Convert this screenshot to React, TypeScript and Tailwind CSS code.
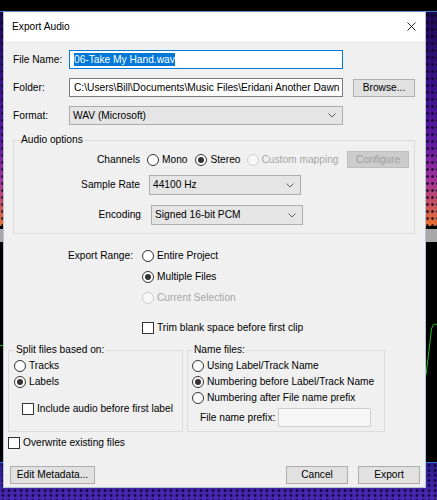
import React from 'react';

function Radio({ label, checked = false, disabled = false }: { label: string; checked?: boolean; disabled?: boolean }) {
  return (
    <div className="flex h-[16px] items-center">
      <span
        className={`flex h-[12px] w-[12px] shrink-0 items-center justify-center rounded-full border ${disabled ? 'border-[#cccccc] bg-[#f7f7f7]' : 'border-[#333333] bg-white'}`}>
        {checked && <span className="h-[6px] w-[6px] rounded-full bg-[#333333]" />}
      </span>
      <span className={`ml-[3px] whitespace-nowrap ${disabled ? 'text-[#a6a6a6]' : 'text-black'}`}>{label}</span>
    </div>
  );
}

function Check({ label }: { label: string }) {
  return (
    <div className="flex h-[16px] items-center">
      <span className="h-[12px] w-[12px] shrink-0 border border-[#333333] bg-white" />
      <span className="ml-[3px] whitespace-nowrap">{label}</span>
    </div>
  );
}

function Chevron() {
  return (
    <svg width="8" height="5" viewBox="0 0 8 5" className="shrink-0">
      <path d="M0.5 0.5 L4 4 L7.5 0.5" fill="none" stroke="#606060" strokeWidth="1" />
    </svg>
  );
}

function Combo({ value, className }: { value: string; className: string }) {
  return (
    <div className={`flex items-center justify-between border border-[#adadad] bg-[#e5e5e5] pl-[3px] pr-[6px] ${className}`}>
      <span className="whitespace-nowrap">{value}</span>
      <Chevron />
    </div>
  );
}

function Btn({ label, className, disabled = false }: { label: string; className: string; disabled?: boolean }) {
  return (
    <button
      className={`flex items-center justify-center border ${disabled ? 'border-[#bfbfbf] bg-[#cccccc] text-[#a0a0a0]' : 'border-[#adadad] bg-[#e1e1e1] text-black'} ${className}`}>
      {label}
    </button>
  );
}

export default function App() {
  return (
    <div className="relative flex h-[500px] w-[437px] flex-col overflow-hidden bg-black font-['Liberation_Sans',Arial,sans-serif] text-[10.2px] text-black">
      {/* background: the editor window behind the dialog */}
      <div className="h-[11px] bg-black" />
      <div className="h-[1px] bg-[#3a7ad8]" />
      <div className="h-[214px] bg-[radial-gradient(circle,rgba(8,2,30,0.75)_1px,transparent_1.7px),linear-gradient(to_bottom,#1c0a50,#3a128a_35%,#5a1a9e_60%,#a0309a_78%,#e8702e)] bg-[length:5px_7px,100%_100%]" />
      <div className="h-[3px] bg-black" />
      <div className="h-[13px] bg-[#a9a9a9]" />
      <div className="h-[220px] bg-black" />
      <div className="h-[1px] bg-[#2f6fd8]" />
      <div className="flex-1 bg-[radial-gradient(circle,rgba(10,5,40,0.8)_1px,transparent_1.8px),linear-gradient(to_bottom,#2a1a8c,#4a28b4)] bg-[length:6px_5px,100%_100%]" />

      <div className="absolute left-0 top-[345px] h-[1px] w-[4px] bg-[#1fb01f]" />
      <svg className="absolute left-[424px] top-[320px]" width="13" height="58" viewBox="0 0 13 58">
        <path d="M2 55 L7.5 9 Q8.5 4 11 4 L13 4.5" fill="none" stroke="#22c022" strokeWidth="1" />
      </svg>

      {/* dialog */}
      <div className="absolute left-[3px] top-[11px] w-[423px] border border-[#b8c2d0] border-t-[#5f8fd0] bg-[#f0f0f0]">
        <div className="flex h-[29px] items-center justify-between bg-white pl-[8px] pr-[9px]">
          <span>Export Audio</span>
          <svg width="9" height="9" viewBox="0 0 9 9">
            <path d="M0.5 0.5 L8.5 8.5 M8.5 0.5 L0.5 8.5" stroke="#111111" strokeWidth="0.9" />
          </svg>
        </div>

        <div className="pb-[3px] pt-[9px]">
          <div className="flex h-[19px] items-center pl-[9px]">
            <span className="w-[56px]">File Name:</span>
            <div className="flex h-[19px] w-[274px] items-center border border-[#0078d7] bg-white pl-[4px]">
              <span className="bg-[#0078d7] leading-[13px] text-white">06-Take My Hand.wav</span>
            </div>
          </div>

          <div className="mt-[9px] flex h-[19px] items-center pl-[9px]">
            <span className="w-[56px]">Folder:</span>
            <div className="flex h-[19px] w-[274px] items-center overflow-hidden border border-[#7a7a7a] bg-white pl-[4px]">
              <span className="whitespace-nowrap">C:\Users\Bill\Documents\Music Files\Eridani Another Dawn</span>
            </div>
            <Btn label="Browse..." className="ml-[10px] h-[18px] w-[62px]" />
          </div>

          <div className="mt-[9px] flex h-[19px] items-center pl-[9px]">
            <span className="w-[56px]">Format:</span>
            <Combo value="WAV (Microsoft)" className="h-[19px] w-[274px]" />
          </div>

          <div className="relative ml-[9px] mt-[15px] w-[402px] border border-[#dcdcdc] pb-[8px] pt-[10px]">
            <span className="absolute left-[6px] top-[-8px] bg-[#f0f0f0] px-[1px] leading-[14px]">Audio options</span>
            <div className="flex h-[17px] items-center">
              <span className="w-[126px] text-right">Channels</span>
              <div className="ml-[7px]">
                <Radio label="Mono" />
              </div>
              <div className="ml-[8px]">
                <Radio label="Stereo" checked />
              </div>
              <div className="ml-[6px]">
                <Radio label="Custom mapping" disabled />
              </div>
              <Btn label="Configure" disabled className="ml-auto mr-[5px] h-[17px] w-[62px]" />
            </div>
            <div className="mt-[7px] flex items-center">
              <span className="w-[126px] text-right">Sample Rate</span>
              <Combo value="44100 Hz" className="ml-[9px] h-[20px] w-[152px]" />
            </div>
            <div className="mt-[10px] flex items-center">
              <span className="w-[127px] text-right">Encoding</span>
              <Combo value="Signed 16-bit PCM" className="ml-[10px] h-[20px] w-[152px]" />
            </div>
          </div>

          <div className="mt-[14px] flex">
            <span className="flex h-[16px] w-[129px] items-center justify-end">Export Range:</span>
            <div className="ml-[9px] flex flex-col">
              <Radio label="Entire Project" />
              <div className="mt-[5px]">
                <Radio label="Multiple Files" checked />
              </div>
              <div className="mt-[5px]">
                <Radio label="Current Selection" disabled />
              </div>
              <div className="mt-[14px]">
                <Check label="Trim blank space before first clip" />
              </div>
            </div>
          </div>

          <div className="mt-[14px] flex gap-[4px] pl-[4px]">
            <div className="relative h-[82px] w-[175px] border border-[#dcdcdc] pl-[5px] pt-[7px]">
              <span className="absolute left-[6px] top-[-8px] bg-[#f0f0f0] px-[1px] leading-[14px]">Split files based on:</span>
              <Radio label="Tracks" />
              <Radio label="Labels" checked />
              <div className="mt-[11px] pl-[8px]">
                <Check label="Include audio before first label" />
              </div>
            </div>
            <div className="relative h-[82px] w-[198px] border border-[#dcdcdc] pl-[4px] pt-[7px]">
              <span className="absolute left-[5px] top-[-8px] bg-[#f0f0f0] px-[1px] leading-[14px]">Name files:</span>
              <Radio label="Using Label/Track Name" />
              <Radio label="Numbering before Label/Track Name" checked />
              <Radio label="Numbering after File name prefix" />
              <div className="mt-[2px] flex h-[19px] items-center pl-[8px]">
                <span className="w-[78px] whitespace-nowrap">File name prefix:</span>
                <div className="h-[19px] w-[93px] border border-[#d0d0d0] bg-[#f7f7f7]" />
              </div>
            </div>
          </div>

          <div className="mt-[3px] pl-[4px]">
            <Check label="Overwrite existing files" />
          </div>

          <div className="mt-[15px] flex pl-[6px] pr-[5px]">
            <Btn label="Edit Metadata..." className="h-[18px] w-[85px]" />
            <Btn label="Cancel" className="ml-auto h-[18px] w-[62px]" />
            <Btn label="Export" className="ml-[10px] h-[18px] w-[62px]" />
          </div>
        </div>
      </div>
    </div>
  );
}
